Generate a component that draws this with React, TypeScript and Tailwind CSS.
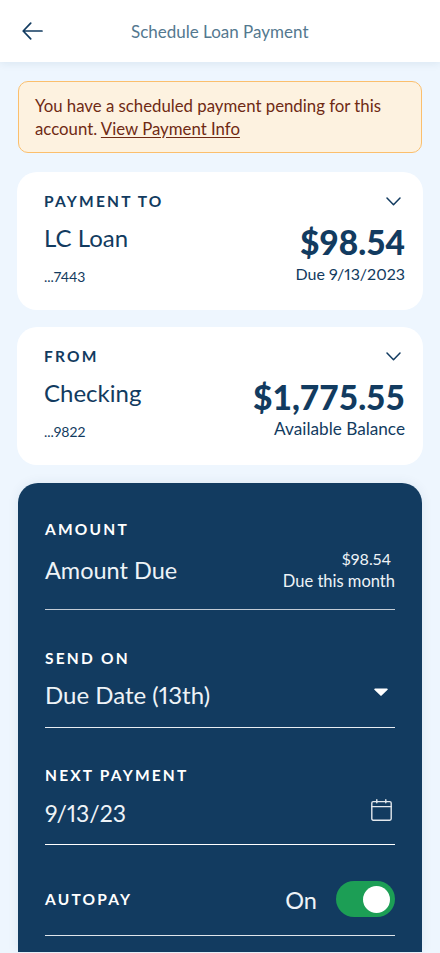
const sans = "font-['Lato','Noto_Sans',sans-serif] proportional-nums";

function Chevron() {
  return (
    <svg className="mr-[4px] h-[9px] w-[15px] text-[#123b60]" viewBox="0 0 15 9" fill="none" stroke="currentColor" strokeWidth="1.5" strokeLinecap="round" strokeLinejoin="round">
      <path d="M1 1l6.5 6.8L14 1" />
    </svg>
  );
}

function AccountCard(props: { label: string; name: string; mask: string; amount: string; note: string; noteClass: string }) {
  return (
    <div className="mx-[17px] h-[137.5px] rounded-[20px] bg-white pr-[18px] pl-[27px] pt-[19px]">
      <div className="flex h-[20px] items-center justify-between">
        <span className="text-[15.5px] leading-[20px] font-bold tracking-[2.2px] text-[#123b60]">{props.label}</span>
        <Chevron />
      </div>
      <div className="mt-[11px] flex justify-between">
        <div>
          <div className="text-[24px] leading-[32px] text-[#123b60]">{props.name}</div>
          <div className="mt-[13px] text-[14px] leading-[20px] text-[#123b60]">{props.mask}</div>
        </div>
        <div className="text-right">
          <div className="text-[33.5px] leading-[40px] font-black text-[#123b60] tabular-nums">{props.amount}</div>
          <div className={`mt-[1px] leading-[22px] text-[#123b60] ${props.noteClass}`}>{props.note}</div>
        </div>
      </div>
    </div>
  );
}

function Label(props: { children: string }) {
  return <div className="text-[15.5px] leading-[20px] font-bold tracking-[2.2px] text-white">{props.children}</div>;
}

export default function App() {
  return (
    <div className={`${sans} h-[953px] w-[440px] overflow-hidden bg-[#eef6fe]`}>
      <header className="flex h-[62px] items-center bg-white pl-[22px] shadow-[0_2px_8px_rgba(18,59,96,0.08)]">
        <svg className="h-[18px] w-[21px] text-[#123b60]" viewBox="0 0 21 18" fill="none" stroke="currentColor" strokeWidth="1.7" strokeLinecap="round" strokeLinejoin="round">
          <path d="M20 9H1.2M8.7 1.2L1.2 9l7.5 7.8" />
        </svg>
        <div className="mt-[1px] ml-[88px] text-[17px] text-[#54788f]">Schedule Loan Payment</div>
      </header>

      <div className="mx-[18px] mt-[19px] h-[72px] rounded-[10px] border border-[#fbbf6d] bg-[#fdf2e0] pr-[10px] pl-[16px] pt-[12px] text-[16.8px] leading-[23px] text-[#6f2a14]">
        You have a scheduled payment pending for this account. <span className="underline underline-offset-2">View Payment Info</span>
      </div>

      <div className="mt-[19px] flex flex-col gap-[17.5px]">
        <AccountCard label="PAYMENT TO" name="LC Loan" mask="...7443" amount="$98.54" note="Due 9/13/2023" noteClass="text-[16px]" />
        <AccountCard label="FROM" name="Checking" mask="...9822" amount="$1,775.55" note="Available Balance" noteClass="text-[17.2px]" />
      </div>

      <section className="mx-[18px] mt-[18.5px] h-[469px] rounded-t-[20px] bg-[#123b60] px-[27px] pt-[36px] shadow-[0_0_12px_rgba(18,59,96,0.08)]">
        <Label>AMOUNT</Label>
        <div className="flex h-[71px] items-center justify-between border-b border-[#c3ccd6] pb-[11px]">
          <span className="mt-[5px] text-[23.5px] text-[#eef3f7]">Amount Due</span>
          <div className="mt-[2px] text-right leading-[23px] text-[#eef3f7]">
            <div className="pr-[4px] text-[16px]">$98.54</div>
            <div className="text-[16.5px]">Due this month</div>
          </div>
        </div>

        <div className="mt-[38px]">
          <Label>SEND ON</Label>
        </div>
        <div className="flex h-[60px] items-center justify-between border-b border-[#e8edf2] pb-[5px]">
          <span className="text-[24px] text-[#eef3f7]">Due Date (13th)</span>
          <svg className="mr-[7px] mb-[6px] h-[8px] w-[14px]" viewBox="0 0 14 8">
            <path d="M1 0.5h12a0.8 0.8 0 0 1 0.6 1.3L7.6 7.6a0.8 0.8 0 0 1-1.2 0L0.4 1.8A0.8 0.8 0 0 1 1 0.5z" fill="#fff" />
          </svg>
        </div>

        <div className="mt-[37px]">
          <Label>NEXT PAYMENT</Label>
        </div>
        <div className="flex h-[60px] items-center justify-between border-b border-white pb-[3px]">
          <span className="text-[23px] text-[#eef3f7]">9/13/23</span>
          <svg className="mr-[3px] mb-[6px] h-[22px] w-[21px] text-[#e3e8ed]" viewBox="0 0 21 22" fill="none" stroke="currentColor" strokeWidth="1.4" strokeLinecap="round" strokeLinejoin="round">
            <rect x="0.8" y="2.6" width="19.4" height="18.6" rx="1.4" />
            <path d="M0.8 7.6h19.4M5.8 0.8v3M14.8 0.8v3" />
          </svg>
        </div>

        <div className="flex h-[91px] items-center justify-between border-b border-[#dfe5eb] pt-[18px]">
          <Label>AUTOPAY</Label>
          <div className="flex items-center gap-[19px]">
            <span className="mt-[3px] text-[23.5px] text-[#eef3f7]">On</span>
            <div className="flex h-[36px] w-[59px] items-center justify-end rounded-full bg-[#1c9e55] pr-[5px]">
              <div className="h-[27px] w-[27px] rounded-full bg-white" />
            </div>
          </div>
        </div>
      </section>
    </div>
  );
}
